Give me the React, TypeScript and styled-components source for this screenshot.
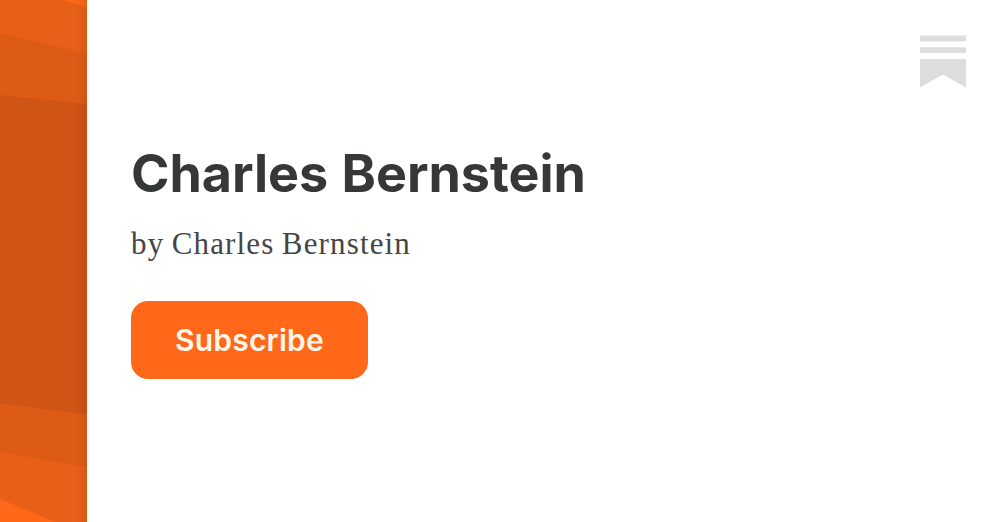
import React from 'react';
import styled, { createGlobalStyle } from 'styled-components';

const COLORS = {
    ORANGE: '#ff6719',
    TYPE_DARK: '#363737',
    TYPE_GREY: '#454545',
    LOGO: '#dddddd',
};

const GlobalStyle = createGlobalStyle`
    * {
        box-sizing: border-box;
    }

    body {
        margin: 0;
        background: #ffffff;
    }
`;

const Card = styled.div`
    display: flex;
    width: 1000px;
    height: 522px;
    overflow: hidden;
    background: #ffffff;
`;

const Cover = styled.div`
    position: relative;
    flex: 0 0 87.4px;
    overflow: hidden;
    background: ${COLORS.ORANGE};

    &::after {
        content: '';
        position: absolute;
        top: 0;
        right: 0;
        bottom: 0;
        width: 12px;
        background: linear-gradient(to right, rgba(80, 30, 0, 0), rgba(80, 30, 0, 0.1));
    }
`;

const Waves = styled.svg`
    display: block;
`;

const Content = styled.main`
    flex: 1 1 auto;
    display: flex;
    flex-direction: column;
    align-items: flex-start;
    padding: 143px 0 0 43.6px;
`;

const Title = styled.h1`
    margin: 0;
    font-family: Inter, sans-serif;
    font-size: 52px;
    font-weight: 700;
    line-height: 62px;
    letter-spacing: 0;
    word-spacing: 1px;
    white-space: nowrap;
    color: ${COLORS.TYPE_DARK};
`;

const Author = styled.p`
    margin: 19px 0 0;
    font-family: 'Liberation Serif', serif;
    font-size: 31px;
    line-height: 40px;
    letter-spacing: 1.15px;
    word-spacing: -1.5px;
    white-space: nowrap;
    color: ${COLORS.TYPE_GREY};
`;

const SubscribeButton = styled.button`
    width: 237px;
    height: 78px;
    margin: 37px 0 0;
    padding: 0;
    border: 0;
    border-radius: 17px;
    background: ${COLORS.ORANGE};
    font-family: Inter, sans-serif;
    font-size: 30px;
    font-weight: 600;
    line-height: 40px;
    letter-spacing: 0.2px;
    text-align: center;
    color: #fff5e8;
`;

const Aside = styled.aside`
    flex: 0 0 auto;
    padding: 35px 34px 0 0;
`;

const Logo = styled.svg`
    display: block;
`;

const App = () => (
    <>
        <GlobalStyle />
        <Card>
            <Cover>
                <Waves width="88" height="522" viewBox="0 0 88 522" aria-hidden="true">
                    <path d="M0 0H64L88 8V522H55L0 499Z" fill="#e86018" />
                    <path d="M0 33Q44 43 88 54V467Q44 461 0 451Z" fill="#de5b16" />
                    <path d="M0 95L88 104V414Q44 410 0 403Z" fill="#d05414" />
                </Waves>
            </Cover>
            <Content>
                <Title>Charles Bernstein</Title>
                <Author>by Charles Bernstein</Author>
                <SubscribeButton type="button">Subscribe</SubscribeButton>
            </Content>
            <Aside>
                <Logo width="46" height="53" viewBox="0 0 46 53" fill={COLORS.LOGO}>
                    <path d="M0 0.5H46V6.5H0ZM0 12.3H46V18H0ZM0 24H46V52.5L23 39.5L0 52.5Z" />
                </Logo>
            </Aside>
        </Card>
    </>
);

export default App;
